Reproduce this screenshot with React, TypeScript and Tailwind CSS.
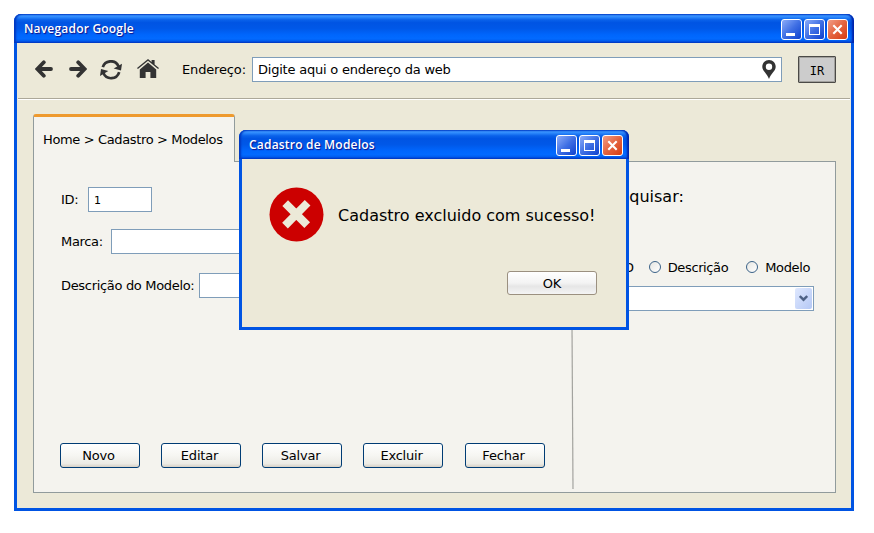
import type { ReactNode } from 'react';

function Caption({ title }: { title: string }) {
  return (
    <header className="flex h-[29px] items-start justify-between rounded-t-[7px] bg-[linear-gradient(180deg,#0a5ce0_0%,#3c96ff_6%,#2a86fb_11%,#0a62ea_20%,#0054e3_30%,#0058e8_50%,#0066fd_72%,#026aff_85%,#005cee_93%,#0040cc_100%)] pr-[6px] pl-[10px] shadow-[inset_2px_0_2px_#0038c0,inset_-2px_0_2px_#0022a8]">
      <span className="pt-[6px] font-['Open_Sans'] text-[12px] leading-[17px] font-semibold tracking-[0.2px] whitespace-nowrap text-white [text-shadow:1px_1px_1px_#0f1089]">{title}</span>
      <div className="flex gap-[2px] pt-[5px]">
        <CaptionButton>
          <rect x="5" y="14" width="9" height="3" fill="white" />
        </CaptionButton>
        <CaptionButton>
          <path d="M5 5h11v11H5zM6 8v7h9V8z" fill="white" fillRule="evenodd" />
        </CaptionButton>
        <CaptionButton close>
          <path d="M6.3 6.3l8.4 8.4M14.7 6.3l-8.4 8.4" stroke="white" strokeWidth="2.1" />
        </CaptionButton>
      </div>
    </header>
  );
}

function CaptionButton({ children, close = false }: { children: ReactNode; close?: boolean }) {
  return (
    <button
      className={`size-[21px] rounded-[3px] border border-white ${
        close ? 'bg-linear-to-br from-[#f09c85] via-[#e4633e] to-[#d63a08]' : 'bg-linear-to-br from-[#8cabf8] via-[#3f6fe4] to-[#0c3fce]'
      }`}
    >
      <svg className="-m-px size-[21px]" viewBox="0 0 21 21">{children}</svg>
    </button>
  );
}

function PushButton({ label, className }: { label: string; className: string }) {
  return (
    <button className={`h-[25px] w-[80px] rounded-[3px] border border-[#003c74] bg-[linear-gradient(180deg,#ffffff_0%,#f6f6f2_50%,#ecebe5_85%,#d6d0c5_100%)] pr-[3px] leading-[23px] tracking-[-0.2px] ${className}`}>
      {label}
    </button>
  );
}

function Field({ label, labelWidth, inputWidth, value }: { label: string; labelWidth: string; inputWidth: string; value?: string }) {
  return (
    <label className="flex h-[25px] items-center">
      <span className={`pt-px tracking-[-0.32px] whitespace-nowrap ${labelWidth}`}>{label}</span>
      <span className={`h-[25px] border border-[#7f9db9] bg-white pl-[5px] text-[11px] leading-[25px] ${inputWidth}`}>{value}</span>
    </label>
  );
}

function Radio({ label }: { label: string }) {
  return (
    <label className="flex items-start gap-[7px]">
      <span className="mt-[3px] size-[12px] rounded-full border border-[#3b6288] bg-linear-to-br from-[#e6e6e2] to-white" />
      <span className="pt-px">{label}</span>
    </label>
  );
}

function Toolbar() {
  return (
    <div className="mx-px flex h-[57px] items-start border-b border-white pt-[13px] pl-[17px] shadow-[inset_0_-1px_0_#aca899]">
      <svg className="mt-[4px] h-[18px] w-[18px]" viewBox="0 0 18 18" fill="none" stroke="#333" strokeWidth="3.8" strokeLinecap="round">
        <path d="M8.8 2.3L2.4 9L8.8 15.7M3 9H16" />
      </svg>
      <svg className="mt-[4px] ml-[16px] h-[18px] w-[18px]" viewBox="0 0 18 18" fill="none" stroke="#333" strokeWidth="3.8" strokeLinecap="round">
        <path d="M9.2 2.3L15.6 9L9.2 15.7M15 9H2" />
      </svg>
      <svg className="mt-[4px] ml-[13px] h-[20px] w-[22px]" viewBox="0 0 22 20" fill="#333">
        <path d="M22 3.7L21 10.5L13.7 8.5ZM0 15.9L1 9.1L8.3 11.1Z" />
        <path d="M2.8 7.2A8.4 8.4 0 0 1 18.6 6.5M19.2 12.2A8.4 8.4 0 0 1 3.4 13.1" fill="none" stroke="#333" strokeWidth="2.7" />
      </svg>
      <svg className="mt-[3px] ml-[15px] h-[19px] w-[22px]" viewBox="0 0 22 19" fill="#333">
        <path d="M11 3.4L19.2 10.4V19H13.4V13H8.6V19H2.8V10.4Z" />
        <path d="M0 8.9L11 0L14.6 3V.9H17.6V5.4L22 8.9L21.1 9.9L11 1.8L.9 9.9Z" />
      </svg>
      <span className="mt-[4px] ml-[23px] w-[70px] pt-px leading-[18px] tracking-[-0.15px]">Endereço:</span>
      <div className="mt-px flex h-[25px] w-[530px] items-center justify-between border border-[#7f9db9] bg-white pr-[5px] pl-[5px]">
        <span className="tracking-[-0.22px]">Digite aqui o endereço da web</span>
        <svg className="mb-[1px] h-[19px] w-[14px]" viewBox="0 0 14 19">
          <path d="M7 0C3 0 .3 3 .3 6.8C.3 11 5 13.5 7 19C9 13.5 13.7 11 13.7 6.8C13.7 3 11 0 7 0ZM7 3.5A3.2 3.2 0 1 1 7 9.9A3.2 3.2 0 1 1 7 3.5Z" fill="#333" fillRule="evenodd" />
        </svg>
      </div>
      <button className="ml-[16px] h-[27px] w-[38px] rounded-[1px] border border-[#4b4a47] bg-[#ccc] pt-[2px] font-['DejaVu_Sans_Mono'] text-[12px] leading-[22px] shadow-[inset_0_0_0_1px_#77756f80]">IR</button>
    </div>
  );
}

function Dialog() {
  return (
    <section className="absolute top-[130px] left-[239px] h-[200px] w-[390px] rounded-t-[7px] bg-[#0054e3]">
      <Caption title="Cadastro de Modelos" />
      <div className="mx-[3px] h-[168px] bg-[#ece9d8] pt-[28px]">
        <div className="flex items-center pl-[27px]">
          <svg className="size-[55px]" viewBox="0 0 55 55">
            <circle cx="27.5" cy="27.5" r="27" fill="#c00" />
            <path d="M16.2 16.2L38.2 38.2M38.6 15.8L16 38.6" stroke="#ece9d8" strokeWidth="8" />
          </svg>
          <p className="ml-[14px] pt-[2px] text-[16px] leading-[20px] whitespace-nowrap">Cadastro excluido com sucesso!</p>
        </div>
        <button className="mt-[29px] ml-[265px] h-[24px] w-[90px] rounded-[3px] border border-[#9b9080] bg-[linear-gradient(180deg,#ffffff_0%,#f3f3f3_50%,#e6e6e6_65%,#f4f4f4_100%)] pt-px leading-[22px] tracking-[-0.2px]">OK</button>
      </div>
    </section>
  );
}

export default function App() {
  return (
    <main className="relative h-[533px] w-[874px] overflow-hidden bg-white p-[14px] font-['DejaVu_Sans',sans-serif] text-[13px] text-black">
      <section className="h-[497px] w-[840px] rounded-t-[7px] bg-[#0054e3]">
        <Caption title="Navegador Google" />
        <div className="mx-[3px] h-[465px] bg-[#ece9d8]">
          <Toolbar />
          <div className="px-[16px] pt-[14px]">
            <div className="relative z-10 -mb-px h-[48px] w-[202px] overflow-hidden rounded-t-[3px] border-r border-l border-[#919b9c] border-t-[3px] border-t-[#ee9a2e] bg-[#f4f3ee] pt-[14px] pl-[9px] leading-[18px] tracking-[-0.36px] whitespace-nowrap">
              Home &gt; Cadastro &gt; Modelos
            </div>
            <div className="flex h-[332px] w-[803px] border border-[#919b9c] bg-[#f4f3ee]">
              <form className="flex w-[536px] flex-col pt-[25px] pl-[27px]">
                <Field label="ID:" labelWidth="w-[27px]" inputWidth="w-[64px]" value="1" />
                <div className="h-[17px]" />
                <Field label="Marca:" labelWidth="w-[50px]" inputWidth="w-[300px]" />
                <div className="h-[19px]" />
                <Field label="Descrição do Modelo:" labelWidth="w-[138px]" inputWidth="w-[260px]" />
                <div className="mt-[145px] -ml-px flex gap-[21px]">
                  <PushButton label="Novo" className="" />
                  <PushButton label="Editar" className="" />
                  <PushButton label="Salvar" className="" />
                  <PushButton label="Excluir" className="" />
                  <PushButton label="Fechar" className="ml-px" />
                </div>
              </form>
              <svg className="h-[327px] w-[5px] shrink-0" viewBox="0 0 5 327">
                <path d="M1 0L3 327" stroke="#a3a39f" strokeWidth="1.2" />
              </svg>
              <aside className="flex flex-1 flex-col pr-[21px] pt-[25px]">
                <h2 className="pl-[27px] text-[16px] leading-[20px]">Pesquisar:</h2>
                <div className="mt-[51px] flex h-[19px] justify-end gap-[18px] pr-[4px] leading-[18px] tracking-[-0.38px]">
                  <div className="-mr-[3px]"><Radio label="ID" /></div>
                  <Radio label="Descrição" />
                  <Radio label="Modelo" />
                </div>
                <div className="mt-[9px] ml-[18px] flex h-[25px] justify-end border border-[#7f9db9] bg-white p-px">
                  <span className="flex h-[21px] w-[17px] items-center justify-center rounded-[2px] bg-linear-to-br from-[#dfe8fe] to-[#b5c8f5]">
                    <svg className="h-[7px] w-[9px]" viewBox="0 0 9 7"><path d="M.8 1L4.5 4.7L8.2 1" fill="none" stroke="#4d6185" strokeWidth="2.4" /></svg>
                  </span>
                </div>
              </aside>
            </div>
          </div>
        </div>
      </section>
      <Dialog />
    </main>
  );
}
